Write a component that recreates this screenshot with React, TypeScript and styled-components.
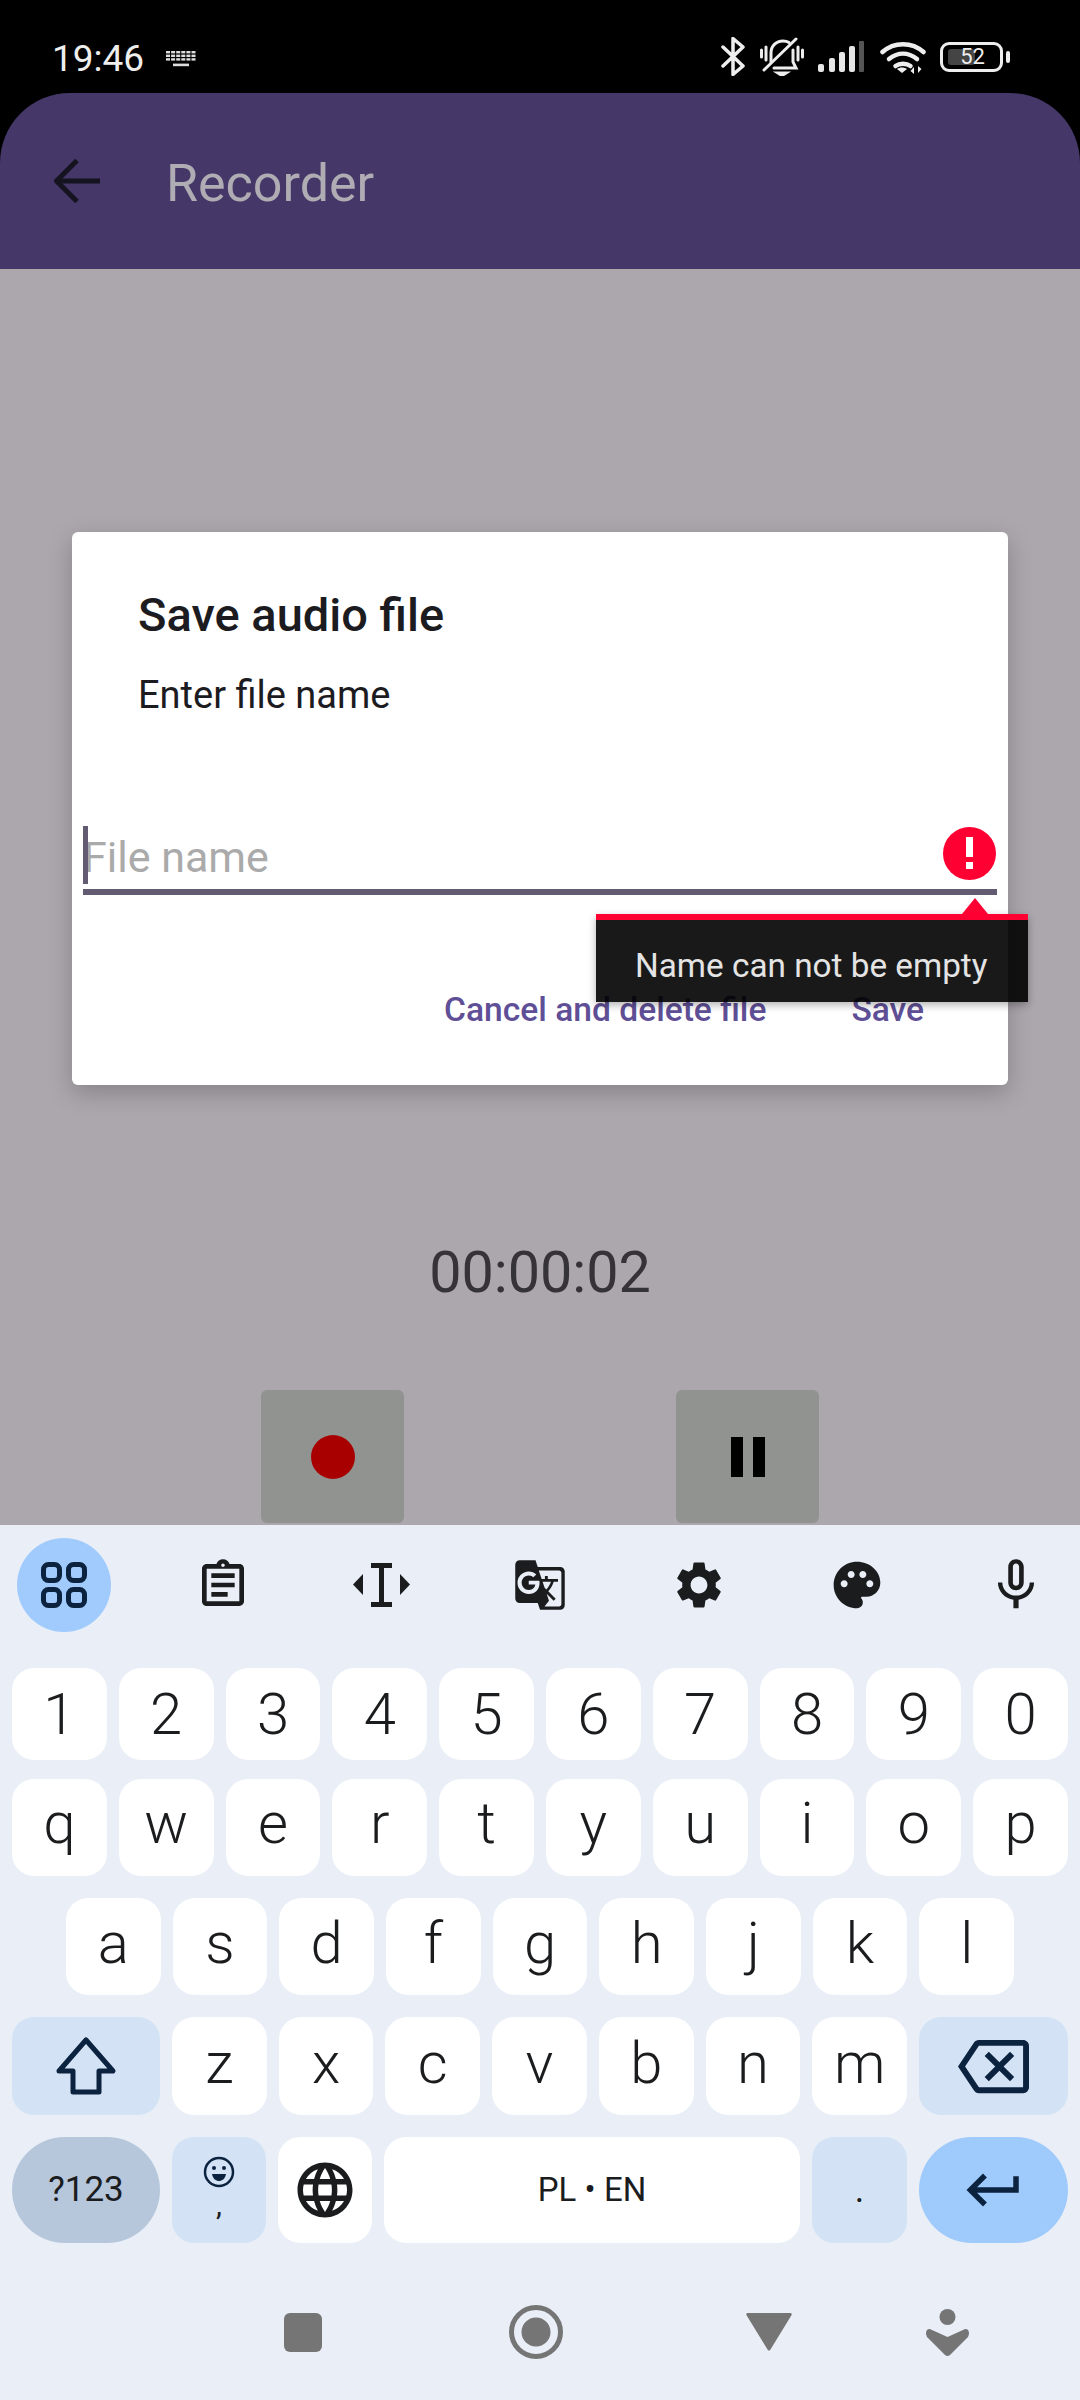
import * as React from "react";
import styled, { createGlobalStyle } from "styled-components";
import {
  MdGTranslate,
  MdKeyboardReturn,
  MdLanguage,
  MdMicNone,
  MdOutlineAssignment,
  MdOutlineBackspace,
  MdPalette,
  MdSettings,
} from "react-icons/md";

const NAVY = "#0c2340";
const INK = "#1b1c1e";

const GlobalStyle = createGlobalStyle`
  html, body {
    margin: 0;
    padding: 0;
    background: #000;
  }
  body {
    font-family: Roboto, "Liberation Sans", sans-serif;
  }
  * {
    box-sizing: border-box;
  }
`;

const Screen = styled.div`
  position: relative;
  width: 1080px;
  height: 2400px;
  display: flex;
  flex-direction: column;
  background: #000;
  overflow: hidden;
`;

/* status bar */
const StatusBar = styled.div`
  height: 93px;
  flex: none;
  display: flex;
  align-items: flex-start;
  justify-content: space-between;
  padding: 37px 71px 0 52px;
  color: #eee;
`;

const StatusLeft = styled.div`
  display: flex;
  align-items: center;
  gap: 22px;
`;

const Time = styled.span`
  font-size: 37px;
  line-height: 43px;
  font-weight: 400;
`;

const StatusIcons = styled.div`
  display: flex;
  align-items: center;
  gap: 14px;
  height: 39px;
`;

const Battery = styled.div`
  position: relative;
  width: 63px;
  height: 30px;
  margin-right: 6px;
  border: 3px solid #eee;
  border-radius: 9px;
  display: flex;
  align-items: center;
  justify-content: center;
  padding-left: 2px;
  font-size: 22px;
  color: #eee;
  &::before {
    content: "";
    position: absolute;
    left: 5px;
    top: 4px;
    bottom: 4px;
    width: 27px;
    background: #444;
    border-radius: 3px;
  }
  &::after {
    content: "";
    position: absolute;
    right: -10px;
    top: 6px;
    width: 4px;
    height: 12px;
    background: #eee;
    border-radius: 2px;
  }
`;

const BatteryValue = styled.span`
  position: relative;
`;

/* app bar */
const AppBar = styled.div`
  height: 176px;
  flex: none;
  display: flex;
  align-items: center;
  gap: 66px;
  padding: 4px 0 0 54px;
  background: #453768;
  border-radius: 70px 70px 0 0;
`;

const BackIcon = styled.svg`
  margin-bottom: 5px;
`;

const AppTitle = styled.h1`
  margin: 0;
  font-size: 52px;
  font-weight: 400;
  color: #b0acb3;
`;

/* recorder behind the dialog */
const Content = styled.main`
  flex: 1;
  display: flex;
  flex-direction: column;
  justify-content: flex-end;
  align-items: center;
  padding-bottom: 2px;
  background: #aca7ad;
`;

const Timer = styled.div`
  font-size: 57.5px;
  line-height: 66px;
  color: #353238;
  margin-bottom: 84px;
`;

const Controls = styled.div`
  display: flex;
  gap: 272px;
`;

const ControlButton = styled.div`
  width: 143px;
  height: 133px;
  display: flex;
  align-items: center;
  justify-content: center;
  background: #919391;
  border-radius: 6px;
`;

const RecordDot = styled.span`
  width: 44px;
  height: 44px;
  border-radius: 50%;
  background: #a80000;
`;

const PauseBars = styled.span`
  display: flex;
  gap: 10px;
  &::before,
  &::after {
    content: "";
    width: 12px;
    height: 40px;
    background: #000;
  }
`;

/* dialog */
const Dialog = styled.section`
  position: absolute;
  left: 72px;
  top: 532px;
  width: 936px;
  height: 553px;
  padding-top: 57px;
  background: #fff;
  border-radius: 6px;
  box-shadow: 0 8px 24px rgba(0, 0, 0, 0.22);
`;

const DialogTitle = styled.h2`
  margin: 0;
  padding-left: 66px;
  font-size: 47px;
  line-height: 52px;
  font-weight: 500;
  color: #1c1b1f;
`;

const DialogText = styled.p`
  margin: 33px 0 0;
  padding-left: 66px;
  font-size: 38px;
  line-height: 42px;
  color: #1c1b1f;
`;

const Field = styled.div`
  position: relative;
  height: 71px;
  margin: 108px 11px 0;
  display: flex;
  align-items: center;
  justify-content: space-between;
  border-bottom: 6px solid #625b71;
`;

const Caret = styled.span`
  position: absolute;
  left: 0;
  top: 2px;
  width: 5px;
  height: 58px;
  background: #625b71;
`;

const Placeholder = styled.span`
  font-size: 43px;
  line-height: 65px;
  padding-top: 2px;
  color: #aaa;
`;

const ErrorBadge = styled.span`
  width: 53px;
  height: 53px;
  margin: 0 1px 7px 0;
  border-radius: 50%;
  background: #ff0033;
  display: flex;
  flex-direction: column;
  align-items: center;
  justify-content: center;
  gap: 5px;
  &::before {
    content: "";
    width: 7px;
    height: 20px;
    background: #fff;
  }
  &::after {
    content: "";
    width: 7px;
    height: 7px;
    background: #fff;
  }
`;

const Actions = styled.div`
  display: flex;
  justify-content: flex-end;
  gap: 85px;
  margin-top: 95px;
  padding-right: 84px;
`;

const ActionButton = styled.span`
  font-size: 33.6px;
  line-height: 40px;
  font-weight: 500;
  color: #5f4f96;
`;

const ErrorPopup = styled.div`
  position: absolute;
  left: 524px;
  top: 382px;
  width: 432px;
  height: 88px;
  padding: 26px 0 0 39px;
  border-top: 6px solid #ff0033;
  background: rgba(0, 0, 0, 0.9);
  box-shadow: 0 3px 8px rgba(0, 0, 0, 0.3);
  font-size: 33.3px;
  line-height: 40px;
  color: #e4e4e4;
  &::before {
    content: "";
    position: absolute;
    left: 366px;
    top: -22px;
    border-left: 13px solid transparent;
    border-right: 13px solid transparent;
    border-bottom: 16px solid #ff0033;
  }
`;

/* keyboard */
const Keyboard = styled.section`
  flex: none;
  height: 875px;
  display: flex;
  flex-direction: column;
  background: #e9eef7;
`;

const Toolbar = styled.div`
  height: 143px;
  flex: none;
  padding: 13px 17px 0;
  display: flex;
  align-items: flex-start;
  justify-content: space-between;
`;

const ToolSlot = styled.div<{ $active?: boolean }>`
  width: 94px;
  height: 94px;
  display: flex;
  align-items: center;
  justify-content: center;
  border-radius: 50%;
  color: ${INK};
  background: ${({ $active }) => ($active ? "#a1cbfd" : "transparent")};
`;

const KeyRow = styled.div<{ $height: number; $top: number; $inset: number }>`
  height: ${({ $height }) => $height}px;
  margin-top: ${({ $top }) => $top}px;
  padding: 0 ${({ $inset }) => $inset}px;
  flex: none;
  display: flex;
  gap: 12px;
`;

const keyTones = {
  plain: "#fff",
  mod: "#d3e3f5",
  pill: "#b7c7db",
  enter: "#9fcafc",
};

const Key = styled.div<{
  $width?: number;
  $tone?: keyof typeof keyTones;
  $round?: boolean;
  $lift?: number;
}>`
  flex: ${({ $width }) => ($width ? `0 0 ${$width}px` : "1 1 0")};
  display: flex;
  flex-direction: column;
  align-items: center;
  justify-content: center;
  padding-bottom: ${({ $lift }) => $lift ?? 0}px;
  background: ${({ $tone }) => keyTones[$tone ?? "plain"]};
  border-radius: ${({ $round }) => ($round ? "53px" : "22px")};
  font-size: 58px;
  font-weight: 300;
  line-height: 66px;
  color: ${INK};
`;

const SmallLabel = styled.span<{ $size: number; $weight?: number }>`
  font-size: ${({ $size }) => $size}px;
  font-weight: ${({ $weight }) => $weight ?? 400};
  line-height: 40px;
  color: ${INK};
`;

const EmojiComma = styled.span`
  font-size: 30px;
  font-weight: 400;
  line-height: 22px;
  height: 22px;
  margin-top: 6px;
  color: ${INK};
`;

const NavBar = styled.nav`
  flex: 1;
  display: grid;
  grid-template-columns: 233px 233px 233px 123px;
  justify-items: center;
  align-items: center;
  padding: 21px 0 0 186.5px;
`;

const NavSquare = styled.span`
  width: 38px;
  height: 39px;
  background: #757575;
  border-radius: 6px;
`;

const KeyboardGlyph = () => (
  <svg width="30" height="16" viewBox="0 0 30 16" fill="#ddd">
    {[0, 1, 2].map((r) =>
      [0, 1, 2, 3, 4, 5].map((c) => (
        <rect key={`${r}-${c}`} x={c * 5.1} y={r * 3.6} width="4" height="2.4" />
      ))
    )}
    <rect x="7" y="12.6" width="16" height="2.6" />
  </svg>
);

const BluetoothGlyph = () => (
  <svg width="25" height="39" viewBox="0 0 25 39" fill="none" stroke="#eee" strokeWidth="3.5" strokeLinejoin="round" strokeLinecap="round">
    <path d="M2 10 L22 29 L12 37.5 V1.5 L22 10 L2 29" />
  </svg>
);

const BellMutedGlyph = () => (
  <svg width="44" height="39" viewBox="0 0 44 39" fill="none" stroke="#eee" strokeWidth="3" strokeLinecap="round">
    <path d="M1.5 13v7M6 10v13M38 10v13M42.5 13v7" />
    <path d="M11 25V16c0-7 5-12 12-12 2.5 0 4.5.6 6 1.6M33 13v12l3 6H14" />
    <path d="M4 33 36 2" />
    <path d="M18 36h8l-4 2.5z" fill="#eee" />
  </svg>
);

const SignalGlyph = () => (
  <svg width="48" height="31" viewBox="0 0 48 31">
    <rect x="0" y="23" width="6" height="8" rx="2" fill="#e6e6e6" />
    <rect x="11" y="17" width="6" height="14" rx="2" fill="#e6e6e6" />
    <rect x="21" y="11" width="6" height="20" rx="2" fill="#e6e6e6" />
    <rect x="31" y="5" width="6" height="26" rx="2" fill="#e6e6e6" />
    <rect x="41" y="0" width="5" height="31" rx="1" fill="#555" />
  </svg>
);

const WifiGlyph = () => (
  <svg width="46" height="34" viewBox="0 0 46 34" fill="none" stroke="#eee" strokeWidth="4.5" strokeLinecap="round">
    <path d="M2.5 12C14 1.5 32 1.5 43.5 12" />
    <path d="M9 19c9-7 19-7 28 0" />
    <path d="M15.5 26c4-3 11-3 15 0" />
    <path d="M22 33l-5-4c3-2 7-2 10 0z" fill="#eee" stroke="none" />
    <path d="M34 34v-7l-3.5 4zM38 26v7l3.5-4z" fill="#eee" stroke="none" />
  </svg>
);

const BackArrow = () => (
  <BackIcon width="46" height="44" viewBox="0 0 46 44" fill="none" stroke="#15131f" strokeWidth="5">
    <path d="M46 22H3" />
    <path d="M23 1.5 2.5 22 23 42.5" />
  </BackIcon>
);

const AppsGlyph = () => (
  <svg width="46" height="46" viewBox="0 0 46 46" fill="none" stroke={NAVY} strokeWidth="5">
    <rect x="2.5" y="2.5" width="16" height="16" rx="5" />
    <rect x="27.5" y="2.5" width="16" height="16" rx="5" />
    <rect x="2.5" y="27.5" width="16" height="16" rx="5" />
    <rect x="27.5" y="27.5" width="16" height="16" rx="5" />
  </svg>
);

const TextCursorGlyph = () => (
  <svg width="57" height="44" viewBox="0 0 57 44" fill={INK}>
    <path d="M10 11v21L0 21.5z" />
    <path d="M47 11v21l10-10.5z" />
    <path d="M18 0h21v5h-8v34h8v5H18v-5h8V5h-8z" />
  </svg>
);

const ShiftGlyph = () => (
  <svg width="62" height="60" viewBox="0 0 62 60" fill="none" stroke={NAVY} strokeWidth="5" strokeLinejoin="round">
    <path d="M31 4 58 35H44V56H18V35H4Z" />
  </svg>
);

const SmileGlyph = () => (
  <svg width="32" height="32" viewBox="0 0 32 32" fill="none" stroke={NAVY} strokeWidth="2.5">
    <circle cx="16" cy="16" r="14" />
    <circle cx="11" cy="12" r="2" fill={NAVY} stroke="none" />
    <circle cx="21" cy="12" r="2" fill={NAVY} stroke="none" />
    <path d="M9 18h14c-1 5-4 7-7 7s-6-2-7-7z" fill={NAVY} stroke="none" />
  </svg>
);

const NavCircle = () => (
  <svg width="54" height="54" viewBox="0 0 54 54" fill="none">
    <circle cx="27" cy="27" r="24.5" stroke="#757575" strokeWidth="5" />
    <circle cx="27" cy="27" r="14.5" fill="#757575" />
  </svg>
);

const NavTriangle = () => (
  <svg width="46" height="38" viewBox="0 0 46 38">
    <path d="M2 0h42c1.5 0 2 1 1.6 2L24.5 36.5c-.8 1.5-2.2 1.5-3 0L.4 2C0 1 .5 0 2 0z" fill="#757575" />
  </svg>
);

const NavPerson = () => (
  <svg width="45" height="47" viewBox="0 0 45 47" fill="#757575">
    <circle cx="22.5" cy="8" r="8" />
    <path d="M2 21q2-2 5 0l15.5 7L38 21q3-2 5 0 2 3 0 7L25 46q-2.5 2-5 0L2 28q-2-4 0-7z" />
  </svg>
);

const digits = "1234567890".split("");
const topRow = "qwertyuiop".split("");
const midRow = "asdfghjkl".split("");
const lowRow = "zxcvbnm".split("");

export default function App() {
  return (
    <Screen>
      <GlobalStyle />
      <StatusBar>
        <StatusLeft>
          <Time>19:46</Time>
          <KeyboardGlyph />
        </StatusLeft>
        <StatusIcons>
          <BluetoothGlyph />
          <BellMutedGlyph />
          <SignalGlyph />
          <WifiGlyph />
          <Battery>
            <BatteryValue>52</BatteryValue>
          </Battery>
        </StatusIcons>
      </StatusBar>

      <AppBar>
        <BackArrow />
        <AppTitle>Recorder</AppTitle>
      </AppBar>

      <Content>
        <Timer>00:00:02</Timer>
        <Controls>
          <ControlButton>
            <RecordDot />
          </ControlButton>
          <ControlButton>
            <PauseBars />
          </ControlButton>
        </Controls>
      </Content>

      <Dialog>
        <DialogTitle>Save audio file</DialogTitle>
        <DialogText>Enter file name</DialogText>
        <Field>
          <Placeholder>File name</Placeholder>
          <Caret />
          <ErrorBadge />
        </Field>
        <Actions>
          <ActionButton>Cancel and delete file</ActionButton>
          <ActionButton>Save</ActionButton>
        </Actions>
        <ErrorPopup>Name can not be empty</ErrorPopup>
      </Dialog>

      <Keyboard>
        <Toolbar>
          <ToolSlot $active>
            <AppsGlyph />
          </ToolSlot>
          <ToolSlot>
            <MdOutlineAssignment size={56} />
          </ToolSlot>
          <ToolSlot>
            <TextCursorGlyph />
          </ToolSlot>
          <ToolSlot>
            <MdGTranslate size={54} />
          </ToolSlot>
          <ToolSlot>
            <MdSettings size={56} />
          </ToolSlot>
          <ToolSlot>
            <MdPalette size={56} />
          </ToolSlot>
          <ToolSlot>
            <MdMicNone size={62} />
          </ToolSlot>
        </Toolbar>

        <KeyRow $height={92} $top={0} $inset={12}>
          {digits.map((d) => (
            <Key key={d}>{d}</Key>
          ))}
        </KeyRow>
        <KeyRow $height={97} $top={19} $inset={12}>
          {topRow.map((c) => (
            <Key key={c} $lift={10}>
              {c}
            </Key>
          ))}
        </KeyRow>
        <KeyRow $height={97} $top={22} $inset={66}>
          {midRow.map((c) => (
            <Key key={c} $lift={8}>
              {c}
            </Key>
          ))}
        </KeyRow>
        <KeyRow $height={98} $top={22} $inset={12}>
          <Key $width={148} $tone="mod">
            <ShiftGlyph />
          </Key>
          {lowRow.map((c) => (
            <Key key={c} $lift={6}>
              {c}
            </Key>
          ))}
          <Key $width={149} $tone="mod">
            <MdOutlineBackspace size={71} color={NAVY} />
          </Key>
        </KeyRow>
        <KeyRow $height={106} $top={22} $inset={12}>
          <Key $width={148} $tone="pill" $round>
            <SmallLabel $size={35}>?123</SmallLabel>
          </Key>
          <Key $tone="mod" $width={94} $lift={8}>
            <SmileGlyph />
            <EmojiComma>,</EmojiComma>
          </Key>
          <Key $width={94}>
            <MdLanguage size={66} />
          </Key>
          <Key $width={416}>
            <SmallLabel $size={33}>PL • EN</SmallLabel>
          </Key>
          <Key $tone="mod" $width={95}>
            <SmallLabel $size={36}>.</SmallLabel>
          </Key>
          <Key $width={149} $tone="enter" $round>
            <MdKeyboardReturn size={66} color={NAVY} />
          </Key>
        </KeyRow>

        <NavBar>
          <NavSquare />
          <NavCircle />
          <NavTriangle />
          <NavPerson />
        </NavBar>
      </Keyboard>
    </Screen>
  );
}
